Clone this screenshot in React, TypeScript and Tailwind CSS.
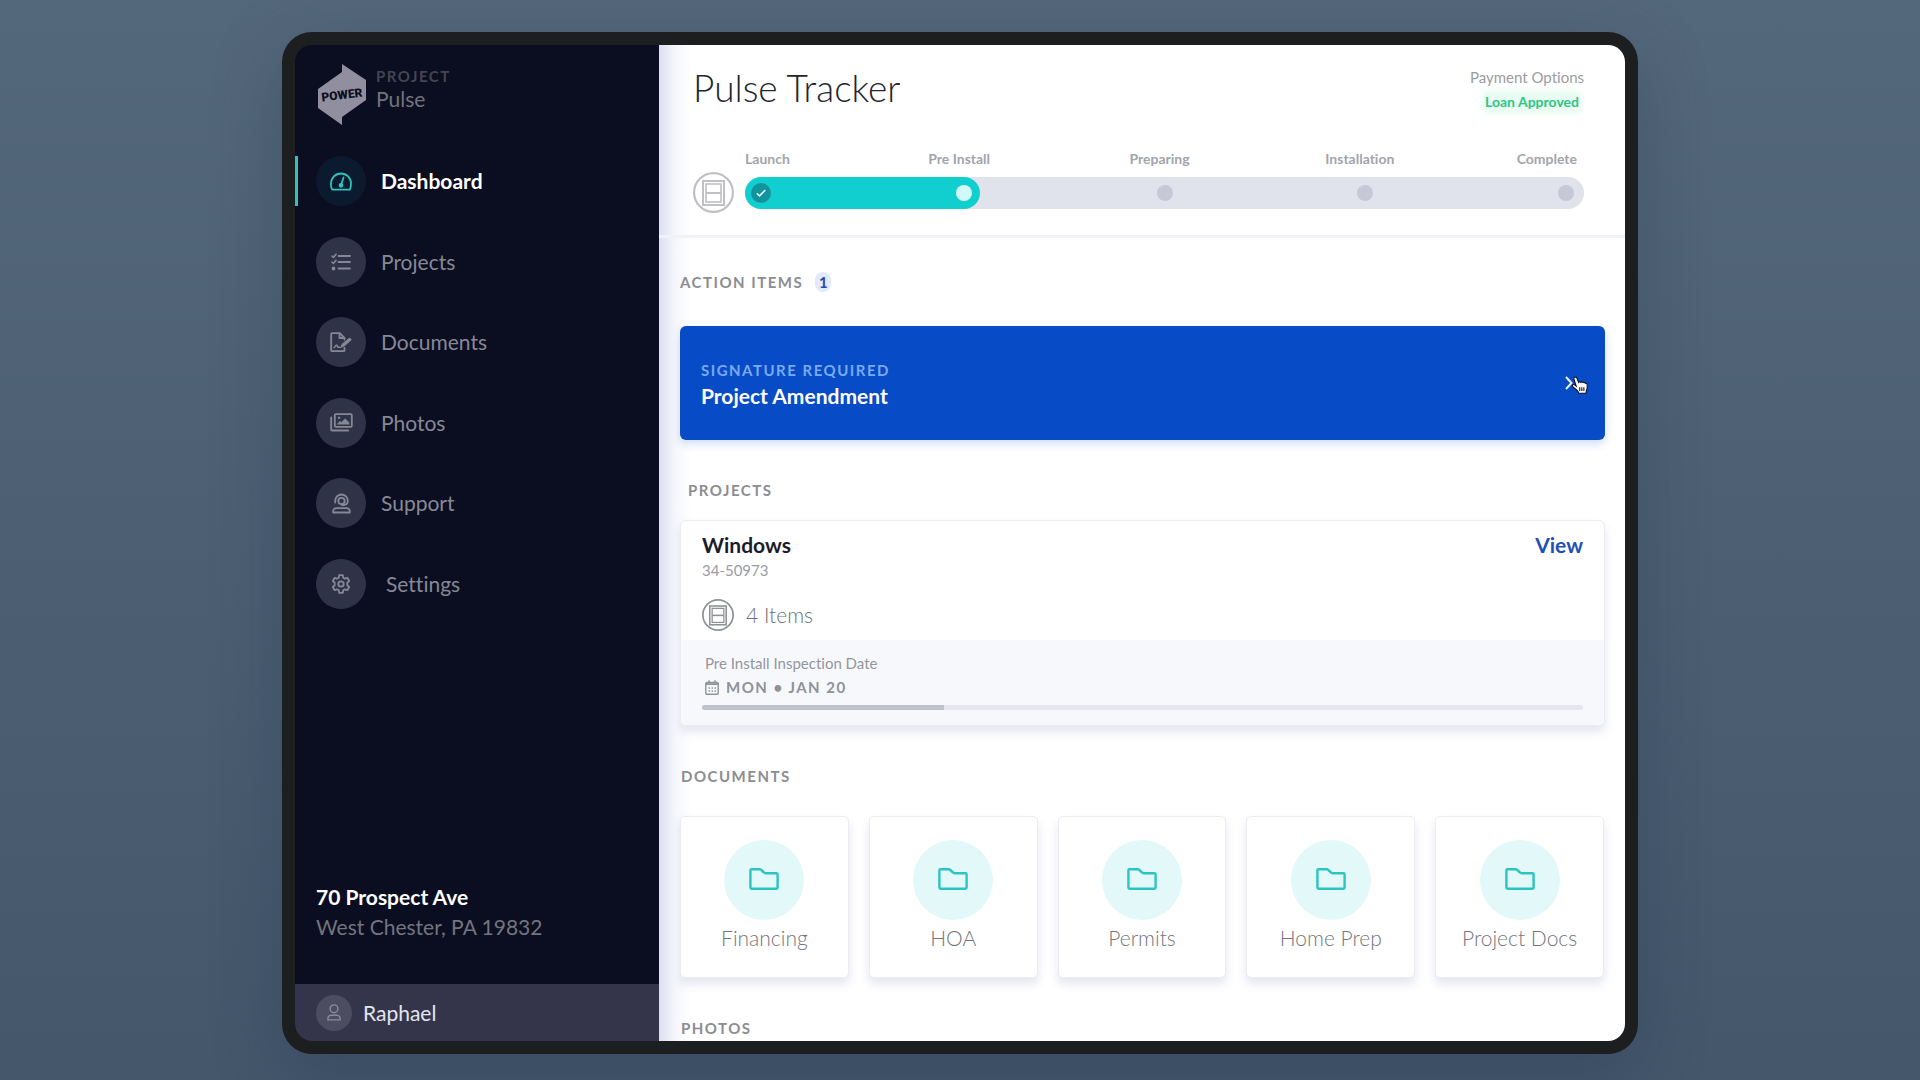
import React from "react";

type IconProps = { className?: string };

const stroke = {
  fill: "none",
  stroke: "currentColor",
  strokeWidth: 1.8,
  strokeLinecap: "round" as const,
  strokeLinejoin: "round" as const,
};

function Logo() {
  return (
    <svg viewBox="0 0 50 61" className="h-[61px] w-[50px] shrink-0" role="img" aria-label="Power">
      <path d="M25 0v8L1 25v19l24 17v-8l24-17V16z" fill="#918f9f" />
      <text
        x="25"
        y="35"
        transform="rotate(-7 25 31)"
        textAnchor="middle"
        fontFamily="Roboto, sans-serif"
        fontWeight="900"
        fontSize="12"
        fill="#0b0e20"
      >
        POWER
      </text>
    </svg>
  );
}

function GaugeIcon() {
  return (
    <svg viewBox="0 0 22 19" className="h-[19px] w-[22px]" {...stroke} strokeWidth={1.8}>
      <path d="M2.200 17.600A9.900 9.900 0 0 1 1 11.500a10 10 0 0 1 20 0c0 2.300-.4 4.300-1.200 6.100z" />
      <path d="M13.600 5.500 11.200 12.500" />
      <circle cx="11" cy="13.300" r="1.500" fill="currentColor" />
    </svg>
  );
}

function ListIcon() {
  return (
    <svg viewBox="0 0 20 18" className="h-[18px] w-5" {...stroke}>
      <path d="M7.500 3H19M7.500 9H19M7.500 15.500H19" />
      <path d="m1 3 1.400 1.400L5 1.200M1 9l1.400 1.400L5 7.200" strokeWidth="1.600" />
      <circle cx="2.500" cy="15.500" r="1" fill="currentColor" />
    </svg>
  );
}

function SignIcon() {
  return (
    <svg viewBox="0 0 23 21" className="h-[21px] w-[23px]" {...stroke}>
      <path d="M14.500 7.500V6L9.800 1.200H2.200a1 1 0 0 0-1 1v16a1 1 0 0 0 1 1h11.300a1 1 0 0 0 1-1V16" />
      <path d="M9.500 1.500V6h4.800" />
      <path d="M4 15.500c1.300 0 1.500-2.500 2.500-2.500s.8 2.300 1.800 2.300h2" strokeWidth="1.500" />
      <path d="m11.500 14.800.4-2.400L19.600 6l1.700 1.800-7.500 6.500z" fill="currentColor" strokeWidth="1" />
    </svg>
  );
}

function PhotosIcon() {
  return (
    <svg viewBox="0 0 23 19" className="h-[19px] w-[23px]" {...stroke}>
      <rect x="4.800" y="1.200" width="17" height="12.600" rx="1" />
      <path d="M1.200 4.500v12a1 1 0 0 0 1 1h16" />
      <path d="m7.500 11 2.500-2.800 1.500 1.300 3.500-3.800L19 9.500V11z" fill="currentColor" strokeWidth=".6" />
      <circle cx="9" cy="4.800" r="1" fill="currentColor" strokeWidth=".5" />
    </svg>
  );
}

function SupportIcon() {
  return (
    <svg viewBox="0 0 19 21" className="h-[21px] w-[19px]" {...stroke}>
      <path d="M3.200 9.500V7.800a6.300 6.300 0 0 1 12.600 0c0 2.700-1.700 4.200-4.300 4.200H9.800" />
      <circle cx="9.500" cy="8" r="3.200" />
      <path d="M1.200 19.500c-.3-2.800.8-4.300 3.600-4.300h9.400c2.800 0 3.900 1.500 3.600 4.300z" />
    </svg>
  );
}

function GearIcon() {
  return (
    <svg viewBox="0 0 20 20" className="h-5 w-5" {...stroke}>
      <path d="M8.200 1.200h3.600l.5 2.500 1.700 1 2.400-.8 1.800 3.100-1.900 1.700v2.600l1.900 1.700-1.800 3.100-2.400-.8-1.700 1-.5 2.500H8.200l-.5-2.500-1.700-1-2.400.8L1.800 13l1.900-1.700V8.700L1.800 7l1.800-3.100 2.400.8 1.700-1z" />
      <circle cx="10" cy="10" r="2.700" />
    </svg>
  );
}

function UserIcon() {
  return (
    <svg viewBox="0 0 14 17" className="h-[17px] w-[14px]" {...stroke} strokeWidth={1.4}>
      <circle cx="7" cy="4.800" r="3.900" />
      <path d="M.9 15.900c-.2-3 .9-4.700 3.200-4.700h5.800c2.300 0 3.400 1.700 3.200 4.700z" />
    </svg>
  );
}

function WindowIcon({ className }: IconProps) {
  return (
    <svg viewBox="0 0 41 41" className={className} fill="none" stroke="currentColor">
      <circle cx="20.500" cy="20.500" r="19.400" strokeWidth="2.200" />
      <rect x="10" y="9" width="21" height="24" strokeWidth="2" />
      <rect x="13" y="12" width="15" height="18" strokeWidth="1.600" />
      <path d="M13 21h15" strokeWidth="2" />
    </svg>
  );
}

function CalendarIcon() {
  return (
    <svg viewBox="0 0 14 15" className="h-[15px] w-[14px]" {...stroke} strokeWidth={1.4}>
      <rect x=".8" y="2.500" width="12.400" height="11.700" rx="1" />
      <path d="M1 4.200h12" strokeWidth="1.800" />
      <path d="M4 .8v2M10 .8v2" />
      <path d="M3.500 8h7.500M3.500 11h7.500" strokeDasharray="1.500 1.500" strokeLinecap="butt" strokeWidth="1.500" />
    </svg>
  );
}

function FolderIcon() {
  return (
    <svg viewBox="0 0 30 22" className="h-[22px] w-[30px]" {...stroke} strokeWidth={2.4}>
      <path d="M2.600 1.300h7.900c.8 0 1.300.2 1.800.7L15 4.500c.5.5 1 .7 1.700.7h10.700c.8 0 1.200.4 1.200 1.200v13.100c0 .8-.4 1.200-1.200 1.200H2.600c-.8 0-1.200-.4-1.200-1.200v-17c0-.8.4-1.200 1.200-1.200z" />
    </svg>
  );
}

function HandCursor() {
  return (
    <svg viewBox="0 0 20 22" className="absolute top-0 left-[6px] h-5 w-[18px]" aria-hidden="true">
      <path
        d="M4.200 1.200c1-.5 1.900.1 2.300 1.100l2 4.700c.5-.9 1.900-1 2.500 0 .7-.8 2-.7 2.500.2.900-.6 2.100-.2 2.400.8 1.100-.3 2 .4 2.100 1.500.2 2.500 0 4.300-.7 6.100-.4 1.200-.6 2-.6 3.400H8.500c-.3-1.500-1.100-2.500-2.300-3.700L2.200 11.900c-.7-.7-.8-1.600-.2-2.100.7-.6 1.700-.4 2.500.3l1.300 1.100L3.300 3.400c-.4-1-.1-1.800.9-2.200z"
        fill="#fff"
        stroke="#0b0e20"
        strokeWidth="1.200"
      />
      <path d="M9.700 12.500v4M12 12.500v4M14.300 12.500v4" stroke="#0b0e20" strokeWidth="1.200" />
    </svg>
  );
}

const navItems = [
  { label: "Projects", icon: <ListIcon /> },
  { label: "Documents", icon: <SignIcon /> },
  { label: "Photos", icon: <PhotosIcon /> },
  { label: "Support", icon: <SupportIcon /> },
];

const navRow = "flex items-center gap-[15px] pl-[21px] text-[21px] leading-7";
const navCircle = "flex size-[50px] shrink-0 items-center justify-center rounded-full";

function Sidebar() {
  return (
    <aside className="flex w-[364px] shrink-0 flex-col bg-[#0b0e20]">
      <div className="flex gap-[9px] pt-[19px] pl-[22px]">
        <Logo />
        <div className="flex flex-col text-[#73737f]">
          <span className="text-[15px] leading-6 font-bold tracking-[1.5px] text-[#444552]">PROJECT</span>
          <span className="text-[21px] leading-[22px]">Pulse</span>
        </div>
      </div>
      <nav className="mt-[31px] flex h-[453px] flex-col justify-between text-[#868896]">
        <a href="#dashboard" aria-current="page" className={navRow + " relative font-bold text-white"}>
          <span className="absolute left-0 h-full w-[3px] bg-[#2cc4bb]" />
          <span className={navCircle + " bg-[#0b1a2f] text-[#2cc4bb]"}>
            <GaugeIcon />
          </span>
          Dashboard
        </a>
        {navItems.map((item) => (
          <a key={item.label} href={"#" + item.label.toLowerCase()} className={navRow}>
            <span className={navCircle + " bg-[#2f3347]"}>{item.icon}</span>
            {item.label}
          </a>
        ))}
        <a href="#settings" className="flex items-center gap-5 pl-[21px] text-[21px] leading-7">
          <span className={navCircle + " bg-[#2f3347]"}>
            <GearIcon />
          </span>
          Settings
        </a>
      </nav>
      <address className="mt-auto mb-[42px] pl-[21px] text-[21px] leading-[30px] text-[#73747f] not-italic">
        <strong className="block font-bold text-white">70 Prospect Ave</strong>
        West Chester, PA 19832
      </address>
      <button type="button" className="flex h-[57px] shrink-0 items-center gap-[11px] bg-[#34354a] pl-[21px] text-left text-[21px] leading-7 text-[#e4e5f0]">
        <span className="flex size-9 items-center justify-center rounded-full bg-[#4c4d60] text-[#8b8c9c]">
          <UserIcon />
        </span>
        Raphael
      </button>
    </aside>
  );
}

const steps = ["Launch", "Pre Install", "Preparing", "Installation", "Complete"];

function Tracker() {
  return (
    <header className="border-b-[3px] border-[#f1f2f8] pr-[41px] pl-[34px]">
      <div className="flex items-start justify-between pt-[19px]">
        <h1 className="text-[37px] leading-[48px] font-light text-[#23242e]">Pulse Tracker</h1>
        <div className="flex flex-col items-end text-right">
          <span className="text-[15px] leading-[26px] text-[#9b9ca2]">Payment Options</span>
          <span className="mt-[3px] mr-[5px] rounded bg-[#e9fcf2] text-[14px] leading-[18px] font-bold text-[#2dc583] shadow-[0_0_6px_3px_#e9fcf2]">
            Loan Approved
          </span>
        </div>
      </div>
      <div className="flex items-end gap-[11px] pt-[38px] pb-[22px]">
        <WindowIcon className="h-[41px] w-[41px] shrink-0 text-[#bfc0c4]" />
        <div className="flex flex-1 flex-col pb-1">
          <ol className="grid grid-cols-[115fr_202fr_202fr_202fr_118fr] pr-[7px] text-center text-[14px] leading-[18px] font-bold text-[#a3a4ac]">
            {steps.map((step) => (
              <li key={step} className="first:text-left last:text-right">
                {step}
              </li>
            ))}
          </ol>
          <div className="relative mt-[9px] flex h-8 items-center justify-between rounded-full bg-[#e0e2ec] pr-[10px] pl-[6px]">
            <span className="absolute inset-y-0 left-0 w-[28%] rounded-full bg-[#12cfcf]" />
            <span className="relative flex size-5 items-center justify-center rounded-full bg-[#13949c]">
              <svg viewBox="0 0 10 8" className="h-2 w-[10px]" fill="none" stroke="#d9fbfb" strokeWidth="1.500">
                <path d="m.8 4.200 2.700 2.700L9.300 1" />
              </svg>
            </span>
            <span className="relative size-4 rounded-full bg-[#d3f8f8]" />
            <span className="size-4 rounded-full bg-[#c6c8d8]" />
            <span className="size-4 rounded-full bg-[#c6c8d8]" />
            <span className="size-4 rounded-full bg-[#c6c8d8]" />
          </div>
        </div>
      </div>
    </header>
  );
}

const heading = "text-[15px] leading-5 font-bold tracking-[1.5px] text-[#8b8d92]";
const cardShadow = "border border-[#ebecf1] bg-white shadow-[0_6px_10px_rgba(90,100,170,0.16)]";
const folders = ["Financing", "HOA", "Permits", "Home Prep", "Project Docs"];

export default function App() {
  return (
    <div className="h-screen bg-linear-to-b from-[#54687b] to-[#44576b] pt-8 pb-[26px] font-['Lato',sans-serif] [font-variant-ligatures:none]">
      <div className="mx-auto flex h-full w-full max-w-[1356px] rounded-[30px] bg-[#1c1e1f] p-[13px] shadow-[0_20px_70px_rgba(30,45,75,0.3)]">
        <div className="flex min-w-0 flex-1 overflow-hidden rounded-[17px]">
          <Sidebar />
          <main className="min-w-0 flex-1 overflow-hidden bg-[linear-gradient(to_right,#dddff2,#f5f6fc_16px,#fff_32px)]">
            <Tracker />
            <div className="pr-5 pl-[21px]">
              <h2 className={heading + " mt-[34px] flex items-center gap-3"}>
                ACTION ITEMS
                <span className="flex h-5 w-4 items-center justify-center rounded-full bg-[#e1e9fb] text-[15px] tracking-normal text-[#2b4ba6]">1</span>
              </h2>
              <button
                type="button"
                className="mt-[34px] flex h-[114px] w-full items-center justify-between rounded-md bg-[#084bc6] pr-8 pl-[21px] text-left shadow-[0_4px_8px_rgba(30,90,220,0.2)]"
              >
                <span className="flex flex-col">
                  <span className="text-[15px] leading-[26px] font-bold tracking-[1.5px] text-[#79aaf5]">SIGNATURE REQUIRED</span>
                  <span className="text-[21px] leading-[26px] font-bold text-white">Project Amendment</span>
                </span>
                <span className="relative">
                  <svg viewBox="0 0 8 14" className="h-[14px] w-2" fill="none" stroke="#e6f4ff" strokeWidth="2">
                    <path d="m1 1 5.500 6L1 13" />
                  </svg>
                  <HandCursor />
                </span>
              </button>

              <h2 className={heading + " mt-10 pl-2"}>PROJECTS</h2>
              <article className={cardShadow + " mt-5 rounded-md"}>
                <div className="px-[21px] pt-[11px] pb-[9px]">
                  <div className="flex items-center justify-between text-[21px] leading-[26px] font-bold">
                    <h3 className="text-[#1b1c2b]">Windows</h3>
                    <a href="#windows" className="text-[#1e4fb8]">
                      View
                    </a>
                  </div>
                  <p className="text-[15px] leading-6 text-[#9a9ca3]">34-50973</p>
                  <p className="mt-[17px] flex items-center gap-3 text-[21px] leading-8 font-light text-[#6f7178]">
                    <WindowIcon className="h-8 w-8 text-[#8e9297]" />4 Items
                  </p>
                </div>
                <div className="rounded-b-md bg-[#f7f8fc] px-[21px] pt-[11px] pb-[15px]">
                  <p className="pl-[3px] text-[15px] leading-6 text-[#94969e]">Pre Install Inspection Date</p>
                  <p className="flex items-center gap-[7px] pl-[3px] text-[15px] leading-6 font-bold tracking-[1.5px] text-[#8e9299]">
                    <CalendarIcon />
                    MON • JAN 20
                  </p>
                  <div className="mt-[6px] h-[5px] overflow-hidden rounded-full bg-[#e6e7ee]">
                    <div className="h-full w-[27.5%] bg-[#bfc1cd]" />
                  </div>
                </div>
              </article>

              <h2 className={heading + " mt-10 pl-px"}>DOCUMENTS</h2>
              <ul className="mt-[30px] mr-px grid grid-cols-5 gap-5">
                {folders.map((name) => (
                  <li key={name}>
                    <a href="#documents" className={cardShadow + " flex h-[162px] flex-col items-center rounded-[5px] pt-[23px] text-[21px] font-light text-[#73757b]"}>
                      <span className="flex size-20 items-center justify-center rounded-full bg-[#e2f8f9] pb-[3px] text-[#2cc4c0]">
                        <FolderIcon />
                      </span>
                      <span className="mt-1 leading-[28px]">{name}</span>
                    </a>
                  </li>
                ))}
              </ul>
              <h2 className={heading + " mt-10 pl-px"}>PHOTOS</h2>
            </div>
          </main>
        </div>
      </div>
    </div>
  );
}
